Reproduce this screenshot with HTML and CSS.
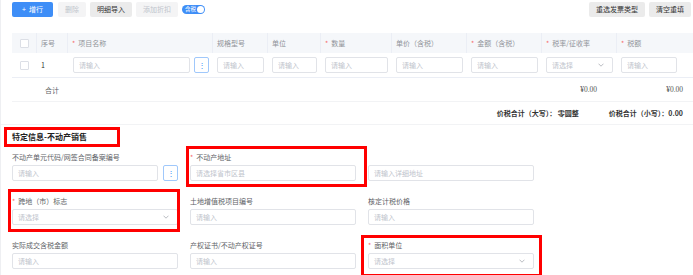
FILE: index.html
```html
<!DOCTYPE html>
<html lang="zh-CN">
<head>
    <meta charset="UTF-8">
    <meta name="viewport" content="width=device-width, initial-scale=1.0">
    <title>发票明细</title>
    <link rel="stylesheet" href="styles.css">
</head>
<body>
<div class="page">
    <!-- Toolbar -->
    <div class="toolbar">
        <button class="btn btn-primary">+&nbsp;&nbsp;增行</button>
        <button class="btn btn-disabled">删除</button>
        <button class="btn">明细导入</button>
        <button class="btn btn-disabled">添加折扣</button>
        <span class="switch"><span class="switch-text">含税</span><span class="switch-knob"></span></span>
        <div class="toolbar-right">
            <button class="btn">重选发票类型</button>
            <button class="btn">清空重填</button>
        </div>
    </div>

    <!-- Items table -->
    <div class="items">
        <div class="tr th">
            <div class="td td-check"><span class="checkbox"></span></div>
            <div class="td">序号</div>
            <div class="td"><span class="req">*</span>项目名称</div>
            <div class="td">规格型号</div>
            <div class="td">单位</div>
            <div class="td"><span class="req">*</span>数量</div>
            <div class="td">单价（含税）</div>
            <div class="td"><span class="req">*</span>金额（含税）</div>
            <div class="td"><span class="req">*</span>税率/征收率</div>
            <div class="td"><span class="req">*</span>税额</div>
        </div>
        <div class="tr row">
            <div class="td td-check"><span class="checkbox"></span></div>
            <div class="td td-no">1</div>
            <div class="td td-name">
                <input class="input" placeholder="请输入">
                <span class="dots-btn">⋮</span>
            </div>
            <div class="td"><input class="input" placeholder="请输入"></div>
            <div class="td"><input class="input" placeholder="请输入"></div>
            <div class="td"><input class="input" placeholder="请输入"></div>
            <div class="td"><input class="input" placeholder="请输入"></div>
            <div class="td"><input class="input" placeholder="请输入"></div>
            <div class="td">
                <div class="select">请选择
                    <svg class="chevron" width="6" height="4" viewBox="0 0 6 4"><path d="M0.5 0.7 L3 3.2 L5.5 0.7" fill="none" stroke="#a8abb2" stroke-width="0.8"/></svg>
                </div>
            </div>
            <div class="td td-last"><input class="input" placeholder="请输入"></div>
        </div>
        <div class="tr total">
            <div class="td"></div>
            <div class="td td-sum">合计</div>
            <div class="td"></div>
            <div class="td"></div>
            <div class="td"></div>
            <div class="td"></div>
            <div class="td"></div>
            <div class="td"></div>
            <div class="td td-money">¥0.00</div>
            <div class="td td-money td-money-last">¥0.00</div>
        </div>
    </div>

    <div class="summary">
        <span>价税合计（大写）： 零圆整</span>
        <span>价税合计（小写）：0.00</span>
    </div>

    <!-- Special info -->
    <div class="section-title">特定信息-不动产销售</div>

    <div class="form-grid">
        <div class="field">
            <div class="field-label">不动产单元代码/网签合同备案编号</div>
            <div class="field-line">
                <input class="input" placeholder="请输入">
                <span class="dots-btn">⋮</span>
            </div>
        </div>
        <div class="field marked mark-addr">
            <div class="field-label"><span class="req">*</span>不动产地址</div>
            <input class="input" placeholder="请选择省市区县">
        </div>
        <div class="field">
            <div class="field-label"></div>
            <input class="input" placeholder="请输入详细地址">
        </div>

        <div class="field marked mark-cross">
            <div class="field-label"><span class="req">*</span>跨地（市）标志</div>
            <div class="select">请选择
                <svg class="chevron" width="6" height="4" viewBox="0 0 6 4"><path d="M0.5 0.7 L3 3.2 L5.5 0.7" fill="none" stroke="#a8abb2" stroke-width="0.8"/></svg>
            </div>
        </div>
        <div class="field">
            <div class="field-label">土地增值税项目编号</div>
            <input class="input" placeholder="请输入">
        </div>
        <div class="field">
            <div class="field-label">核定计税价格</div>
            <input class="input" placeholder="请输入">
        </div>

        <div class="field">
            <div class="field-label">实际成交含税金额</div>
            <input class="input" placeholder="请输入">
        </div>
        <div class="field">
            <div class="field-label">产权证书/不动产权证号</div>
            <input class="input" placeholder="请输入">
        </div>
        <div class="field marked mark-area">
            <div class="field-label"><span class="req">*</span>面积单位</div>
            <div class="select">请选择
                <svg class="chevron" width="6" height="4" viewBox="0 0 6 4"><path d="M0.5 0.7 L3 3.2 L5.5 0.7" fill="none" stroke="#a8abb2" stroke-width="0.8"/></svg>
            </div>
        </div>
    </div>
</div>
</body>
</html>
```

FILE: styles.css
```css
body {
    margin: 0;
    padding: 0;
    background: #fff;
    font-family: "Noto Sans CJK SC", "Noto Sans", sans-serif;
    font-size: 7px;
    color: #606266;
    overflow: hidden;
}

.page {
    border-left: 1px solid #eeeff2;
    min-height: 100vh;
    box-sizing: border-box;
}

/* Toolbar */
.toolbar {
    display: flex;
    align-items: center;
    gap: 4px;
    padding: 2px 2px 0 11px;
    height: 15px;
}

.btn {
    font-family: inherit;
    font-size: 7px;
    height: 15px;
    line-height: 15px;
    padding: 0 7px;
    border: none;
    border-radius: 2px;
    background: #ebebeb;
    color: #333;
}

.btn-primary {
    background: #3e8ef7;
    color: #fff;
    width: 41px;
    margin-right: 1px;
}

.btn-disabled {
    background: #f4f4f5;
    color: #c0c4cc;
}

.switch {
    display: inline-flex;
    align-items: center;
    justify-content: space-between;
    width: 23px;
    height: 9px;
    border-radius: 5px;
    background: #3e8ef7;
    padding: 0 1px 0 3px;
    box-sizing: border-box;
}

.switch-text {
    color: #fff;
    font-size: 5.5px;
    line-height: 9px;
}

.switch-knob {
    width: 7px;
    height: 7px;
    border-radius: 50%;
    background: #fff;
}

.toolbar-right {
    margin-left: auto;
    display: flex;
    gap: 4px;
}

/* Items table */
.items {
    margin: 16px 0 0 11px;
    width: 681px;
}

.tr {
    display: grid;
    grid-template-columns: 25px 31px 145px 55px 53px 71px 75px 75px 75px 76px;
}

.th {
    height: 20px;
    background: #f5f7fa;
    color: #909399;
}

.th .td {
    border-right: 1px solid #ebeef5;
}

.th .td:last-child {
    border-right: none;
}

.td {
    display: flex;
    align-items: center;
    padding: 0 4px;
    box-sizing: border-box;
    min-width: 0;
}

.td-check {
    justify-content: center;
}

.checkbox {
    width: 7px;
    height: 7px;
    border: 1px solid #dcdfe6;
    border-radius: 1px;
    background: #fff;
}

.row {
    height: 24px;
    border-bottom: 1px solid #ebeef5;
}

.td-no {
    color: #333;
}

.td-name {
    gap: 4px;
    padding-left: 5px;
}

.td-last {
    padding-right: 16px;
}

.total {
    height: 23px;
    border-bottom: 1px solid #f2f3f5;
}

.td-sum {
    padding-left: 8px;
}

.td-money {
    justify-content: flex-end;
    padding-right: 20px;
    color: #555;
    font-family: "Liberation Serif", serif;
    font-size: 7.5px;
}

.td-money-last {
    padding-right: 10px;
}

.req {
    color: #f56c6c;
    margin-right: 3px;
}

.input,
.select {
    width: 100%;
    height: 16px;
    border: 1px solid #e1e3e8;
    border-radius: 2px;
    padding: 0 5px;
    box-sizing: border-box;
    font-family: inherit;
    font-size: 7px;
    color: #606266;
    background: #fff;
    outline: none;
    min-width: 0;
}

.input::placeholder {
    color: #c0c4cc;
}

.select {
    display: flex;
    align-items: center;
    justify-content: space-between;
    color: #c0c4cc;
    padding-right: 8px;
}

.dots-btn {
    flex: 0 0 15px;
    height: 16px;
    box-sizing: border-box;
    border: 1px solid #a0c8fb;
    border-radius: 2px;
    color: #3e8ef7;
    display: flex;
    align-items: center;
    justify-content: center;
    font-size: 8px;
    line-height: 1;
}

/* Summary */
.summary {
    display: flex;
    justify-content: flex-end;
    gap: 30px;
    height: 22px;
    align-items: center;
    padding-right: 10px;
    border-bottom: 1px solid #f2f3f5;
    font-weight: bold;
    color: #333;
}

/* Special info section */
.section-title {
    width: 116px;
    height: 20px;
    margin: 2px 0 0 3px;
    border: 3px solid #f00;
    box-sizing: border-box;
    padding-left: 5px;
    line-height: 14px;
    font-size: 8px;
    font-weight: bold;
    color: #222;
}

.form-grid {
    display: grid;
    grid-template-columns: 166px 166px 166px;
    column-gap: 12px;
    row-gap: 15px;
    margin: 5px 0 0 11px;
}

.field {
    display: flex;
    flex-direction: column;
}

.field-label {
    height: 10px;
    line-height: 10px;
    margin-bottom: 3px;
}

.field-line {
    display: flex;
    gap: 5px;
}

.field-line .input {
    flex: 1;
}

/* red annotation frames */
.marked {
    position: relative;
}

.marked::after {
    content: "";
    position: absolute;
    border: 3px solid #f00;
    pointer-events: none;
}

.mark-addr::after {
    top: -6px;
    right: -11px;
    bottom: -6px;
    left: -4px;
}

.mark-cross::after {
    top: -7px;
    right: -2px;
    bottom: -7px;
    left: -4px;
}

.mark-area::after {
    top: -5px;
    right: -8px;
    bottom: -8px;
    left: -7px;
}
```
